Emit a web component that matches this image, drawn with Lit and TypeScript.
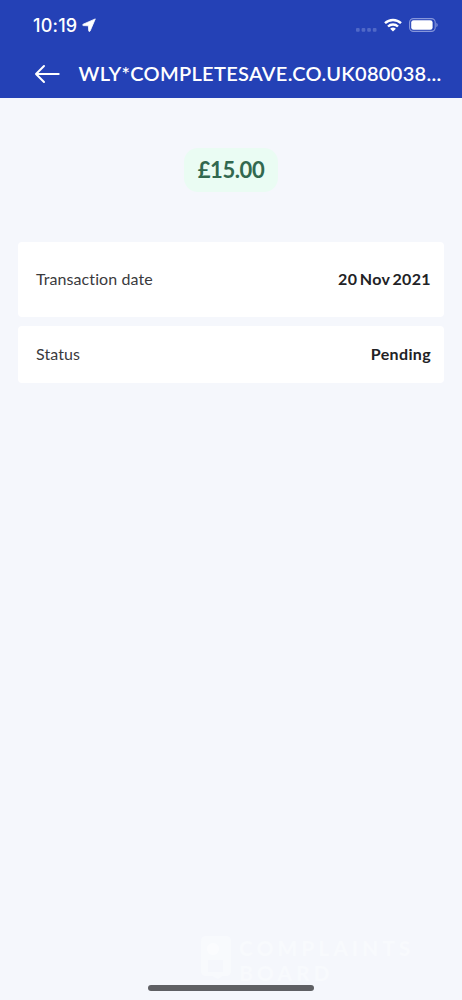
import { LitElement, html, css, svg } from "lit";
import { customElement, property } from "lit/decorators.js";

@customElement("status-bar")
class StatusBar extends LitElement {
  static styles = css`
    :host { display: flex; align-items: center; height: 50px; padding: 0 23px 0 33px; box-sizing: border-box; }
    .time { font: 500 18px/22px Inter, sans-serif; letter-spacing: 0.2px; width: 49px; padding-top: 2px; white-space: nowrap; color: #fff; }
    svg { display: block; flex: none; }
    .spacer { flex: 1; }
    .wifi { margin: 0 7px 0 7px; }
  `;
  render() {
    return html`
      <span class="time">10:19</span>
      <svg class="loc" width="15" height="14" viewBox="0 0 15 14"><path d="M13.300.9 1.200 6.200c-.8.4-.6 1.300.2 1.400l5 .2.300 5c.1.900 1 1 1.400.2z" fill="#fff" stroke="#fff" stroke-width=".8" stroke-linejoin="round"/></svg>
      <span class="spacer"></span>
      <svg width="21" height="14" viewBox="0 0 21 14">
        ${[0, 5.6, 11.2, 16.8].map((x) => svg`<rect x=${x} y="10" width="3.700" height="3.700" rx="1" fill="#5068c7"/>`)}
      </svg>
      <svg class="wifi" width="18" height="14" viewBox="0 0 18 14">
        <g fill="none" stroke="#fff" stroke-width="2.400">
          <path d="M1 5.200a11.500 11.500 0 0 1 16 0"/>
          <path d="M4 8.500a7.200 7.200 0 0 1 10 0"/>
        </g>
        <path d="M9 13.600 6.100 10.800a4.200 4.200 0 0 1 5.800 0z" fill="#fff"/>
      </svg>
      <svg width="30" height="14" viewBox="0 0 30 14">
        <rect x=".6" y=".6" width="25.600" height="12.800" rx="3.800" fill="none" stroke="#8797db" stroke-width="1.100"/>
        <rect x="2.200" y="2.200" width="21.400" height="9.600" rx="2.300" fill="#fff"/>
        <path d="M27.400 4.800c1.700.8 1.700 3.600 0 4.400z" fill="#8797db"/>
      </svg>
    `;
  }
}

@customElement("detail-row")
class DetailRow extends LitElement {
  @property() label = "";
  @property() value = "";
  static styles = css`
    :host { display: flex; justify-content: space-between; align-items: center; box-sizing: border-box;
      padding: 0 13px 1px 18px; background: #fff; border-radius: 4px; font: 400 16px/20px Lato, sans-serif; color: #3a3a3d; }
    .value { font-weight: 700; color: #222225; letter-spacing: 0.350px; word-spacing: -1.700px; }
    .label { letter-spacing: 0.080px; }
  `;
  render() {
    return html`<span class="label">${this.label}</span><span class="value">${this.value}</span>`;
  }
}

@customElement("app-root")
class AppRoot extends LitElement {
  static styles = css`
    :host { display: flex; flex-direction: column; position: relative; width: 100%; height: 1000px; overflow: hidden;
      background: #f5f7fc; font-family: Lato, sans-serif; }
    header { background: #2441b6; height: 98px; flex: none; }
    .nav { display: flex; align-items: center; height: 47px; padding: 0 0 0 34px; color: #fff; }
    .back { display: block; flex: none; margin-right: 17.500px; }
    .title { margin: 0 0 1px; font: 600 20px/26px Lato, sans-serif; letter-spacing: 0.300px; white-space: nowrap; }
    .amount { align-self: center; margin-top: 50px; width: 94px; height: 44px; border-radius: 14px; background: #eafcf3;
      color: #32684f; text-align: center; font-weight: 700; font-size: 22px; letter-spacing: -0.400px; line-height: 44px; }
    .list { display: flex; flex-direction: column; gap: 9px; margin: 50px 18px 0; }
    .tall { height: 75px; }
    .short { height: 57px; }
    .mark { position: absolute; left: 200px; top: 935px; display: flex; gap: 7px; color: #f8fafd;
      font: 900 21px/25px Lato, sans-serif; letter-spacing: 3.900px; }
    .mark svg { display: block; }
    .home { position: absolute; left: 148px; top: 985px; width: 166px; height: 6px; border-radius: 3px; background: #5f6064; }
  `;
  render() {
    return html`
      <header>
        <status-bar></status-bar>
        <div class="nav">
          <svg class="back" width="27" height="20" viewBox="0 0 27 20" fill="none" stroke="#fff" stroke-width="2" stroke-linecap="round" stroke-linejoin="round">
            <path d="M24.700 10H2M10 2 2 10l8 8"/>
          </svg>
          <h1 class="title">WLY*COMPLETESAVE.CO.UK080038...</h1>
        </div>
      </header>
      <div class="amount">£15.00</div>
      <div class="list">
        <detail-row class="tall" label="Transaction date" value="20 Nov 2021"></detail-row>
        <detail-row class="short" label="Status" value="Pending"></detail-row>
      </div>
      <div class="mark">
        <svg width="32" height="44" viewBox="0 0 32 44"><path d="M6 1h20q5 0 5 5v30q0 5-5 5h-3l-5 3-6-3H6q-5 0-5-5V6q0-5 5-5z" fill="#f8fafd"/><circle cx="13" cy="14" r="6" fill="#fbfcfe"/><path d="M8 25h15v12H8z" fill="#f5f7fc"/></svg>
        <div>COMPLAINTS<br>BOARD</div>
      </div>
      <div class="home"></div>
    `;
  }
}
